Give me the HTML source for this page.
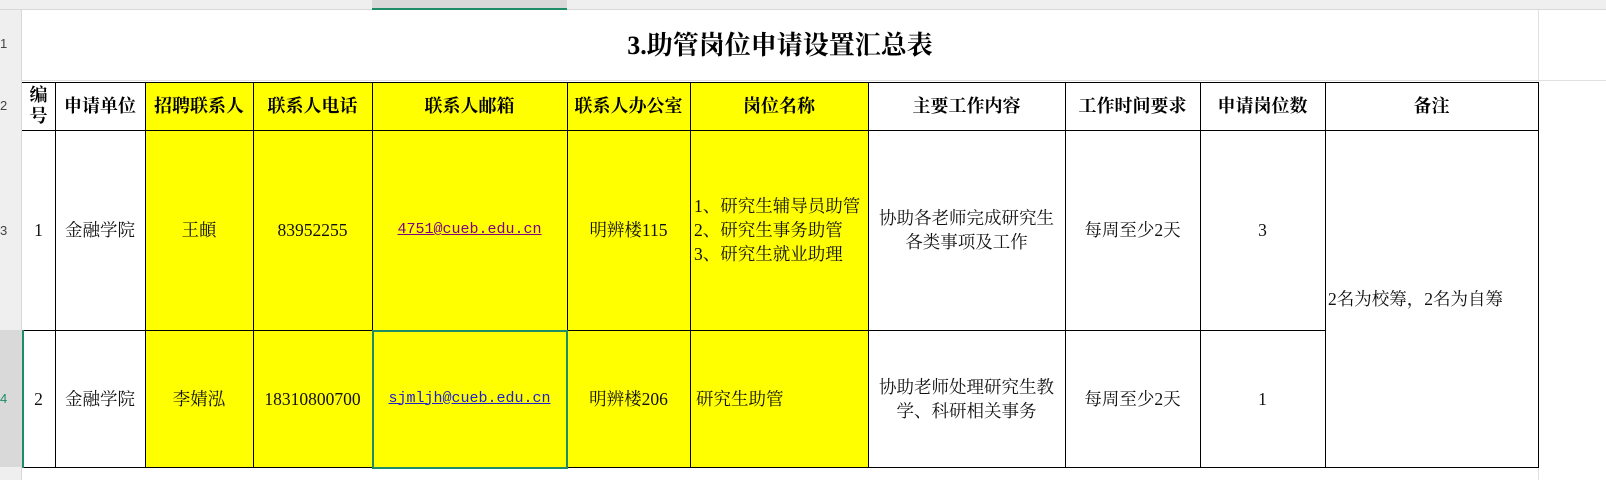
<!DOCTYPE html>
<html><head><meta charset="utf-8"><style>
body{margin:0;width:1606px;height:480px;overflow:hidden;background:#fff;font-family:"Liberation Serif","Noto Serif CJK SC",serif;position:relative}
.a{position:absolute;box-sizing:border-box}
.c{position:absolute;box-sizing:border-box;display:flex;align-items:center;justify-content:center;text-align:center;font-size:17.5px;color:#111;line-height:24px}
.h{font-weight:bold;font-size:18px;color:#000}
.y{background:#ffff00}
.v{position:absolute;width:1px;background:#000}
.hz{position:absolute;height:1px;background:#000}
.g{color:#444;font-size:13px;font-family:"Liberation Sans",sans-serif}
.m{font-family:'Liberation Mono',monospace;font-size:15px;text-decoration:underline}
</style></head><body>
<div class="a" style="left:0;top:0;width:1606px;height:10px;background:#efefef;border-bottom:1px solid #d8d8d8"></div>
<div class="a" style="left:372px;top:0;width:195px;height:10px;background:#d9d9d9;border-bottom:2px solid #1e8c64"></div>
<div class="a" style="left:0;top:10px;width:22px;height:470px;background:#efefef;border-right:1px solid #d8d8d8"></div>
<div class="a" style="left:0;top:330px;width:22px;height:137px;background:#d9d9d9"></div>
<div class="a g" style="left:0;top:36px">1</div>
<div class="a g" style="left:0;top:98px">2</div>
<div class="a g" style="left:0;top:223px">3</div>
<div class="a g" style="left:0;top:391px;color:#1e8c64">4</div>
<div class="a" style="left:1538px;top:10px;width:1px;height:470px;background:#e0e0e0"></div>
<div class="a" style="left:22px;top:80px;width:1584px;height:1px;background:#e0e0e0"></div>
<div class="c" style="left:22px;top:10px;width:1516px;height:72px;font-size:26px;font-weight:bold;color:#000">3.助管岗位申请设置汇总表</div>
<div class="a y" style="left:145px;top:82px;width:723px;height:385px"></div>
<div class="c h" style="left:22px;top:82px;width:33px;height:48px;line-height:21px">编<br>号</div>
<div class="c h" style="left:55px;top:82px;width:90px;height:48px">申请单位</div>
<div class="c h" style="left:145px;top:82px;width:108px;height:48px">招聘联系人</div>
<div class="c h" style="left:253px;top:82px;width:119px;height:48px">联系人电话</div>
<div class="c h" style="left:372px;top:82px;width:195px;height:48px">联系人邮箱</div>
<div class="c h" style="left:567px;top:82px;width:123px;height:48px">联系人办公室</div>
<div class="c h" style="left:690px;top:82px;width:178px;height:48px">岗位名称</div>
<div class="c h" style="left:868px;top:82px;width:197px;height:48px">主要工作内容</div>
<div class="c h" style="left:1065px;top:82px;width:135px;height:48px">工作时间要求</div>
<div class="c h" style="left:1200px;top:82px;width:125px;height:48px">申请岗位数</div>
<div class="c h" style="left:1325px;top:82px;width:213px;height:48px">备注</div>
<div class="c" style="left:22px;top:130px;width:33px;height:200px">1</div>
<div class="c" style="left:55px;top:130px;width:90px;height:200px">金融学院</div>
<div class="c" style="left:145px;top:130px;width:108px;height:200px">王頔</div>
<div class="c" style="left:253px;top:130px;width:119px;height:200px">83952255</div>
<div class="c m" style="left:372px;top:130px;width:195px;height:200px;color:#800080">4751@cueb.edu.cn</div>
<div class="c" style="left:567px;top:130px;width:123px;height:200px">明辨楼115</div>
<div class="c" style="left:690px;top:130px;width:178px;height:200px;justify-content:flex-start;text-align:left;padding-left:4px">1、研究生辅导员助管<br>2、研究生事务助管<br>3、研究生就业助理</div>
<div class="c" style="left:868px;top:130px;width:197px;height:200px">协助各老师完成研究生<br>各类事项及工作</div>
<div class="c" style="left:1065px;top:130px;width:135px;height:200px">每周至少2天</div>
<div class="c" style="left:1200px;top:130px;width:125px;height:200px">3</div>
<div class="c" style="left:1325px;top:130px;width:213px;height:337px;justify-content:flex-start;padding-left:3px">2名为校筹，2名为自筹</div>
<div class="c" style="left:22px;top:330px;width:33px;height:137px">2</div>
<div class="c" style="left:55px;top:330px;width:90px;height:137px">金融学院</div>
<div class="c" style="left:145px;top:330px;width:108px;height:137px">李婧泓</div>
<div class="c" style="left:253px;top:330px;width:119px;height:137px">18310800700</div>
<div class="c m" style="left:372px;top:330px;width:195px;height:137px;color:#2020d0">sjmljh@cueb.edu.cn</div>
<div class="c" style="left:567px;top:330px;width:123px;height:137px">明辨楼206</div>
<div class="c" style="left:690px;top:330px;width:178px;height:137px;justify-content:flex-start;padding-left:6px">研究生助管</div>
<div class="c" style="left:868px;top:330px;width:197px;height:137px">协助老师处理研究生教<br>学、科研相关事务</div>
<div class="c" style="left:1065px;top:330px;width:135px;height:137px">每周至少2天</div>
<div class="c" style="left:1200px;top:330px;width:125px;height:137px">1</div>
<div class="hz" style="left:22px;top:82px;width:1517px"></div>
<div class="hz" style="left:22px;top:130px;width:1517px"></div>
<div class="hz" style="left:22px;top:330px;width:1303px"></div>
<div class="hz" style="left:22px;top:467px;width:1517px"></div>
<div class="v" style="left:55px;top:82px;height:386px"></div>
<div class="v" style="left:145px;top:82px;height:386px"></div>
<div class="v" style="left:253px;top:82px;height:386px"></div>
<div class="v" style="left:372px;top:82px;height:386px"></div>
<div class="v" style="left:567px;top:82px;height:386px"></div>
<div class="v" style="left:690px;top:82px;height:386px"></div>
<div class="v" style="left:868px;top:82px;height:386px"></div>
<div class="v" style="left:1065px;top:82px;height:386px"></div>
<div class="v" style="left:1200px;top:82px;height:386px"></div>
<div class="v" style="left:1325px;top:82px;height:386px"></div>
<div class="v" style="left:1538px;top:82px;height:386px"></div>
<div class="a" style="left:372px;top:330px;width:196px;height:139px;border:2px solid #1e8c64"></div>
<div class="a" style="left:22px;top:330px;width:2px;height:138px;background:#1e8c64"></div>
</body></html>
